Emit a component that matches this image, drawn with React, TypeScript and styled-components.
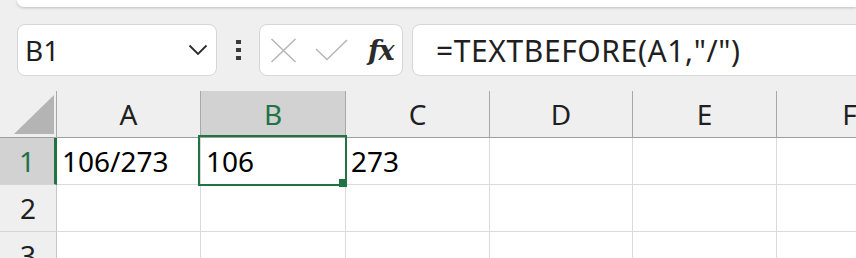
import React from "react";
import styled, { createGlobalStyle } from "styled-components";

const GREEN = "#217346";

const GlobalStyle = createGlobalStyle`
  html, body {
    margin: 0;
    padding: 0;
  }
  body {
    width: 856px;
    height: 258px;
    overflow: hidden;
    background: #efefef;
    font-family: "Noto Sans", "Liberation Sans", sans-serif;
    color: #000;
  }
`;

const Ribbon = styled.div`
  height: 7px;
  margin-left: 17px;
  background: #fff;
  border-bottom-left-radius: 10px;
  box-shadow: 0 1px 3px rgba(0, 0, 0, 0.2);
`;

const FormulaBar = styled.div`
  display: flex;
  align-items: center;
  height: 52px;
  padding: 17px 0 15px 17px;
  overflow: hidden;
`;

const Box = styled.div`
  box-sizing: border-box;
  height: 52px;
  background: #fff;
  border: 1px solid #d6d6d6;
  border-radius: 8px;
  display: flex;
  align-items: center;
  flex-shrink: 0;
`;

const NameBox = styled(Box)`
  width: 200px;
  padding: 0 8px 0 7px;
  justify-content: space-between;
  font-size: 28px;
  color: #1f1f1f;
`;

const Grip = styled.div`
  width: 42px;
  display: flex;
  flex-direction: column;
  align-items: center;
  gap: 4px;
  flex-shrink: 0;
  span {
    width: 5px;
    height: 4px;
    background: #3a3a3a;
  }
`;

const Buttons = styled(Box)`
  width: 144px;
  padding-left: 10px;
  gap: 18px;
`;

const Fx = styled.span`
  font-family: "DejaVu Serif", "Liberation Serif", serif;
  font-style: italic;
  font-weight: bold;
  font-size: 27px;
  color: #2b2b2b;
  margin-left: 2px;
  letter-spacing: -1px;
`;

const FormulaInput = styled(Box)`
  width: 480px;
  margin-left: 9px;
  padding-left: 23px;
  font-size: 30px;
  letter-spacing: 0.6px;
  color: #1f1f1f;
`;

const Sheet = styled.div`
  display: grid;
  width: 923px;
  grid-template-columns: 57px 144px 145px 144px 143px 144px 146px;
  grid-auto-rows: 47px;
`;

const ColHead = styled.div<{ $active?: boolean }>`
  box-sizing: border-box;
  display: flex;
  align-items: center;
  justify-content: center;
  font-size: 28px;
  background: ${(p) => (p.$active ? "#d2d2d2" : "#efefef")};
  color: ${(p) => (p.$active ? GREEN : "#1f1f1f")};
  border-right: 1px solid #a8a8a8;
  border-bottom: 1px solid #9e9e9e;
`;

const Corner = styled(ColHead)`
  position: relative;
  svg {
    position: absolute;
    left: 14px;
    top: 4px;
  }
`;

const RowHead = styled.div<{ $active?: boolean }>`
  box-sizing: border-box;
  display: flex;
  align-items: center;
  justify-content: center;
  font-size: 28px;
  background: ${(p) => (p.$active ? "#d2d2d2" : "#efefef")};
  color: ${(p) => (p.$active ? GREEN : "#1f1f1f")};
  border-right: ${(p) => (p.$active ? `3px solid ${GREEN}` : "1px solid #c6c6c6")};
  border-bottom: 1px solid #d6d6d6;
`;

const Cell = styled.div<{ $selected?: boolean }>`
  box-sizing: border-box;
  position: relative;
  display: flex;
  align-items: center;
  padding-left: 5px;
  font-size: 28px;
  background: #fff;
  border-right: 1px solid #dadada;
  border-bottom: 1px solid #dadada;
  white-space: nowrap;
  ${(p) =>
    p.$selected &&
    `
    z-index: 1;
    &::before {
      content: "";
      position: absolute;
      top: -3px;
      left: -3px;
      right: -2px;
      bottom: -2px;
      border: 2px solid ${GREEN};
    }
    &::after {
      content: "";
      position: absolute;
      right: -2px;
      bottom: -3px;
      width: 8px;
      height: 8px;
      background: ${GREEN};
    }
  `}
`;

const columns = ["A", "B", "C", "D", "E", "F"];
const data: Record<number, string[]> = {
  1: ["106/273", "106", "273", "", "", ""],
  2: ["", "", "", "", "", ""],
  3: ["", "", "", "", "", ""],
};

export default function App() {
  return (
    <>
      <GlobalStyle />
      <Ribbon />
      <FormulaBar>
        <NameBox>
          <span>B1</span>
          <svg width="20" height="12" viewBox="0 0 20 12">
            <path d="M1.5 1.5 L10 10 L18.5 1.5" fill="none" stroke="#2b2b2b" strokeWidth="1.8" />
          </svg>
        </NameBox>
        <Grip>
          <span />
          <span />
          <span />
        </Grip>
        <Buttons>
          <svg width="27" height="25" viewBox="0 0 27 25">
            <path d="M1.5 1 L25.5 24 M25.5 1 L1.5 24" stroke="#b7b7b7" strokeWidth="1.6" fill="none" />
          </svg>
          <svg width="33" height="22" viewBox="0 0 33 22">
            <path d="M1 10 L12 20.5 L32 1" stroke="#b7b7b7" strokeWidth="1.6" fill="none" />
          </svg>
          <Fx>fx</Fx>
        </Buttons>
        <FormulaInput>=TEXTBEFORE(A1,"/")</FormulaInput>
      </FormulaBar>
      <Sheet>
        <Corner>
          <svg width="40" height="39" viewBox="0 0 40 39">
            <polygon points="40,0 40,39 0,39" fill="#b4b4b4" />
          </svg>
        </Corner>
        {columns.map((c) => (
          <ColHead key={c} $active={c === "B"}>
            {c}
          </ColHead>
        ))}
        {[1, 2, 3].map((r) => (
          <React.Fragment key={r}>
            <RowHead $active={r === 1}>{r}</RowHead>
            {data[r].map((v, i) => (
              <Cell key={i} $selected={r === 1 && i === 1}>
                {v}
              </Cell>
            ))}
          </React.Fragment>
        ))}
      </Sheet>
    </>
  );
}
